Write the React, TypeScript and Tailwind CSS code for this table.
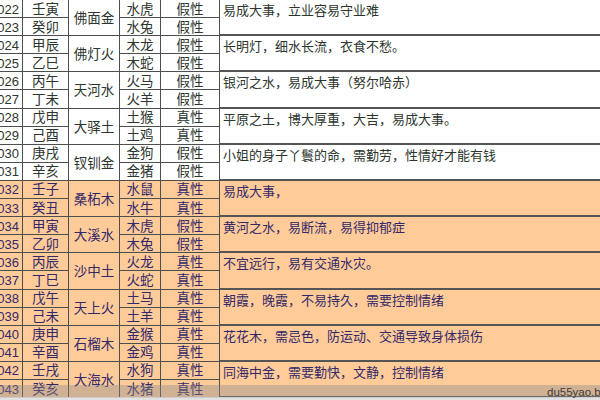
import React from "react";

type Row = { y: string; gz: string; sx: string; zj: string };
type Pair = { ny: string; desc: string; orange: boolean; rows: [Row, Row] };

const pairs: Pair[] = [
  { ny: "佛面金", desc: "易成大事，立业容易守业难", orange: false, rows: [{ y: "2022", gz: "壬寅", sx: "水虎", zj: "假性" }, { y: "2023", gz: "癸卯", sx: "水兔", zj: "假性" }] },
  { ny: "佛灯火", desc: "长明灯，细水长流，衣食不愁。", orange: false, rows: [{ y: "2024", gz: "甲辰", sx: "木龙", zj: "假性" }, { y: "2025", gz: "乙巳", sx: "木蛇", zj: "假性" }] },
  { ny: "天河水", desc: "银河之水，易成大事（努尔哈赤）", orange: false, rows: [{ y: "2026", gz: "丙午", sx: "火马", zj: "假性" }, { y: "2027", gz: "丁未", sx: "火羊", zj: "假性" }] },
  { ny: "大驿土", desc: "平原之土，博大厚重，大吉，易成大事。", orange: false, rows: [{ y: "2028", gz: "戊申", sx: "土猴", zj: "真性" }, { y: "2029", gz: "己酉", sx: "土鸡", zj: "真性" }] },
  { ny: "钗钏金", desc: "小姐的身子丫鬟的命，需勤劳，性情好才能有钱", orange: false, rows: [{ y: "2030", gz: "庚戌", sx: "金狗", zj: "假性" }, { y: "2031", gz: "辛亥", sx: "金猪", zj: "假性" }] },
  { ny: "桑柘木", desc: "易成大事，", orange: true, rows: [{ y: "2032", gz: "壬子", sx: "水鼠", zj: "真性" }, { y: "2033", gz: "癸丑", sx: "水牛", zj: "真性" }] },
  { ny: "大溪水", desc: "黄河之水，易断流，易得抑郁症", orange: true, rows: [{ y: "2034", gz: "甲寅", sx: "木虎", zj: "假性" }, { y: "2035", gz: "乙卯", sx: "木兔", zj: "假性" }] },
  { ny: "沙中土", desc: "不宜远行，易有交通水灾。", orange: true, rows: [{ y: "2036", gz: "丙辰", sx: "火龙", zj: "真性" }, { y: "2037", gz: "丁巳", sx: "火蛇", zj: "真性" }] },
  { ny: "天上火", desc: "朝霞，晚霞，不易持久，需要控制情绪", orange: true, rows: [{ y: "2038", gz: "戊午", sx: "土马", zj: "真性" }, { y: "2039", gz: "己未", sx: "土羊", zj: "真性" }] },
  { ny: "石榴木", desc: "花花木，需忌色，防运动、交通导致身体损伤", orange: true, rows: [{ y: "2040", gz: "庚申", sx: "金猴", zj: "真性" }, { y: "2041", gz: "辛酉", sx: "金鸡", zj: "真性" }] },
  { ny: "大海水", desc: "同海中金，需要勤快，文静，控制情绪", orange: true, rows: [{ y: "2042", gz: "壬戌", sx: "水狗", zj: "真性" }, { y: "2043", gz: "癸亥", sx: "水猪", zj: "真性" }] },
];

const cell = "h-[18.1px] border-r border-b border-[#4e4e4e] flex items-center justify-center pt-[2px]";

function Stack({ items, w, extra }: { items: string[]; w: string; extra?: string }) {
  return (
    <div className={`${w} flex flex-col shrink-0`}>
      {items.map((t, i) => (
        <div key={i} className={`${cell} ${extra ?? ""}`}>
          {t}
        </div>
      ))}
    </div>
  );
}

export default function App() {
  return (
    <div className="relative w-[600px] h-[400px] overflow-hidden bg-white font-['Liberation_Sans','Noto_Sans_CJK_SC',sans-serif] text-[13.5px] leading-[18px]">
      <div className="-ml-[14px] w-[614px] flex flex-col">
        {pairs.map((p, i) => (
          <div
            key={i}
            className={
              p.orange
                ? "flex h-[36.2px] bg-[#ffcc99] text-[#33296a]"
                : "flex h-[36.2px] bg-white text-[#2c352e]"
            }
          >
            <Stack w="w-[37px]" items={p.rows.map((r) => r.y)} extra="text-[13px] pl-[1px]" />
            <Stack w="w-[46px]" items={p.rows.map((r) => r.gz)} />
            <div className="w-[51px] shrink-0 border-r border-b border-[#4e4e4e] flex items-center justify-center pt-[3px]">
              {p.ny}
            </div>
            <Stack w="w-[41px]" items={p.rows.map((r) => r.sx)} />
            <Stack w="w-[59px]" items={p.rows.map((r) => r.zj)} />
            <div className="flex-1 border-b-2 border-[#555] pl-[3px] pt-[2px] text-[13px] whitespace-nowrap">
              {p.desc}
            </div>
          </div>
        ))}
      </div>
      <div className="absolute left-0 right-0 bottom-0 h-[15px] bg-[#8a8a8a]/40">
        <div className="absolute left-0 right-0 bottom-0 h-[3px] bg-[#e6e6e6]/80" />
        <span className="absolute left-[547px] top-0 whitespace-nowrap text-[11.5px] leading-[14px] text-[#3c3c3c]">
          du55yao.blog.163.com
        </span>
      </div>
    </div>
  );
}
